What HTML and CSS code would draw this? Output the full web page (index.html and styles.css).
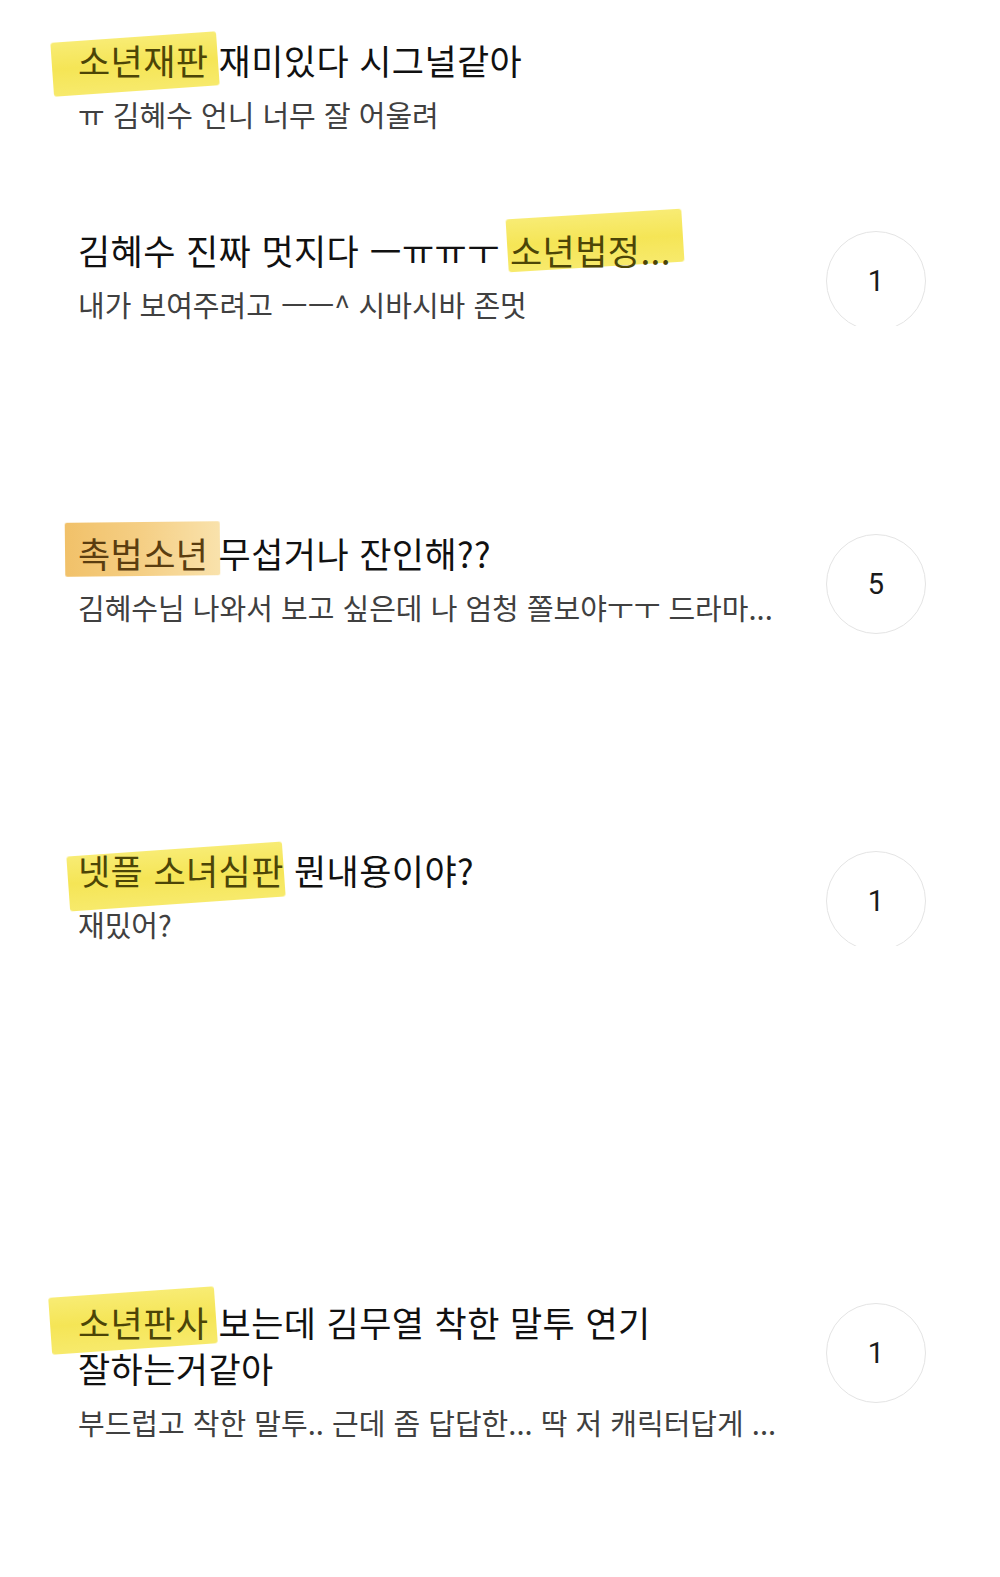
FILE: index.html
```html
<!DOCTYPE html>
<html lang="ko">
<head>
    <meta charset="UTF-8">
    <meta name="viewport" content="width=device-width, initial-scale=1.0">
    <title>검색 결과</title>
    <link rel="stylesheet" href="styles.css">
</head>
<body>

    <div class="post-list">
        <div class="post">
            <div class="post-body">
                <h3 class="title"><span class="mark mark-1">소년재판</span> 재미있다 시그널같아</h3>
                <p class="sub">ㅠ 김혜수 언니 너무 잘 어울려</p>
            </div>
        </div>

        <div class="post post-2">
            <div class="post-body">
                <h3 class="title">김혜수 진짜 멋지다 ㅡㅠㅠㅜ <span class="mark mark-2">소년법정...</span></h3>
                <p class="sub">내가 보여주려고 ㅡㅡ^ 시바시바 존멋</p>
            </div>
            <div class="count clipped">1</div>
        </div>

        <div class="post post-3">
            <div class="post-body">
                <h3 class="title"><span class="mark mark-3">촉법소년</span> 무섭거나 잔인해??</h3>
                <p class="sub">김혜수님 나와서 보고 싶은데 나 엄청 쫄보야ㅜㅜ 드라마...</p>
            </div>
            <div class="count">5</div>
        </div>

        <div class="post post-4">
            <div class="post-body">
                <h3 class="title"><span class="mark mark-4">넷플 소녀심판</span> 뭔내용이야?</h3>
                <p class="sub">재밌어?</p>
            </div>
            <div class="count clipped">1</div>
        </div>

        <div class="post post-5">
            <div class="post-body">
                <h3 class="title"><span class="mark mark-5">소년판사</span> 보는데 김무열 착한 말투 연기<br>잘하는거같아</h3>
                <p class="sub">부드럽고 착한 말투.. 근데 좀 답답한... 딱 저 캐릭터답게 ...</p>
            </div>
            <div class="count">1</div>
        </div>
    </div>

</body>
</html>
```

FILE: styles.css
```css
body {
    margin: 0;
    padding: 37px 74px 0 78px;
    background-color: #ffffff;
    font-family: "Noto Sans CJK KR", "Noto Sans", sans-serif;
    color: #111111;
}
.post {
    display: flex;
    align-items: flex-start;
    gap: 26px;
}
.post-2 {
    margin-top: 95px;
}
.post-3 {
    margin-top: 208px;
}
.post-4 {
    margin-top: 222px;
}
.post-5 {
    margin-top: 357px;
}
.post-body {
    flex: 1;
    min-width: 0;
}
.title {
    position: relative;
    z-index: 0;
    margin: 0;
    font-size: 35px;
    font-weight: 400;
    line-height: 46px;
    letter-spacing: 0.4px;
}
.sub {
    margin: 13px 0 0 0;
    font-size: 29px;
    line-height: 36px;
    color: #404040;
    letter-spacing: 0;
}
.count {
    flex: none;
    width: 100px;
    height: 100px;
    margin-top: 4px;
    margin-bottom: -9px;
    box-sizing: border-box;
    border: 1.5px solid #e4e4e4;
    border-radius: 50%;
    display: flex;
    align-items: center;
    justify-content: center;
    font-family: Roboto, "Liberation Sans", sans-serif;
    font-size: 29px;
    color: #1a1a1a;
}
.count.clipped {
    clip-path: inset(0 0 5px 0);
}

/* highlighter marks */
.mark {
    position: relative;
    color: #4c4507;
}
.mark::before {
    content: "";
    position: absolute;
    z-index: -1;
    border-radius: 3px;
    background: linear-gradient(180deg, #f8ec74 0%, #f5e556 50%, #f7ea6c 100%);
    filter: blur(0.6px);
}
.mark-1::before {
    left: -26px;
    right: -10px;
    top: 3px;
    bottom: -6px;
    transform: rotate(-4deg);
}
.mark-2::before {
    left: -3px;
    right: -12px;
    top: -10px;
    bottom: 8px;
    transform: rotate(-3.5deg);
}
.mark-3 {
    color: #5a3d10;
}
.mark-3::before {
    left: -13px;
    right: -12px;
    top: -5px;
    bottom: 2px;
    border-radius: 2px;
    background: linear-gradient(90deg, #f1c169 0%, #f5cf85 50%, #f9e2ac 100%);
    transform: rotate(-0.6deg);
}
.mark-4::before {
    left: -10px;
    right: 0;
    top: 5px;
    bottom: -9px;
    transform: rotate(-4deg);
}
.mark-5::before {
    left: -28px;
    right: -8px;
    top: -4px;
    bottom: -2px;
    transform: rotate(-4deg);
}
```
